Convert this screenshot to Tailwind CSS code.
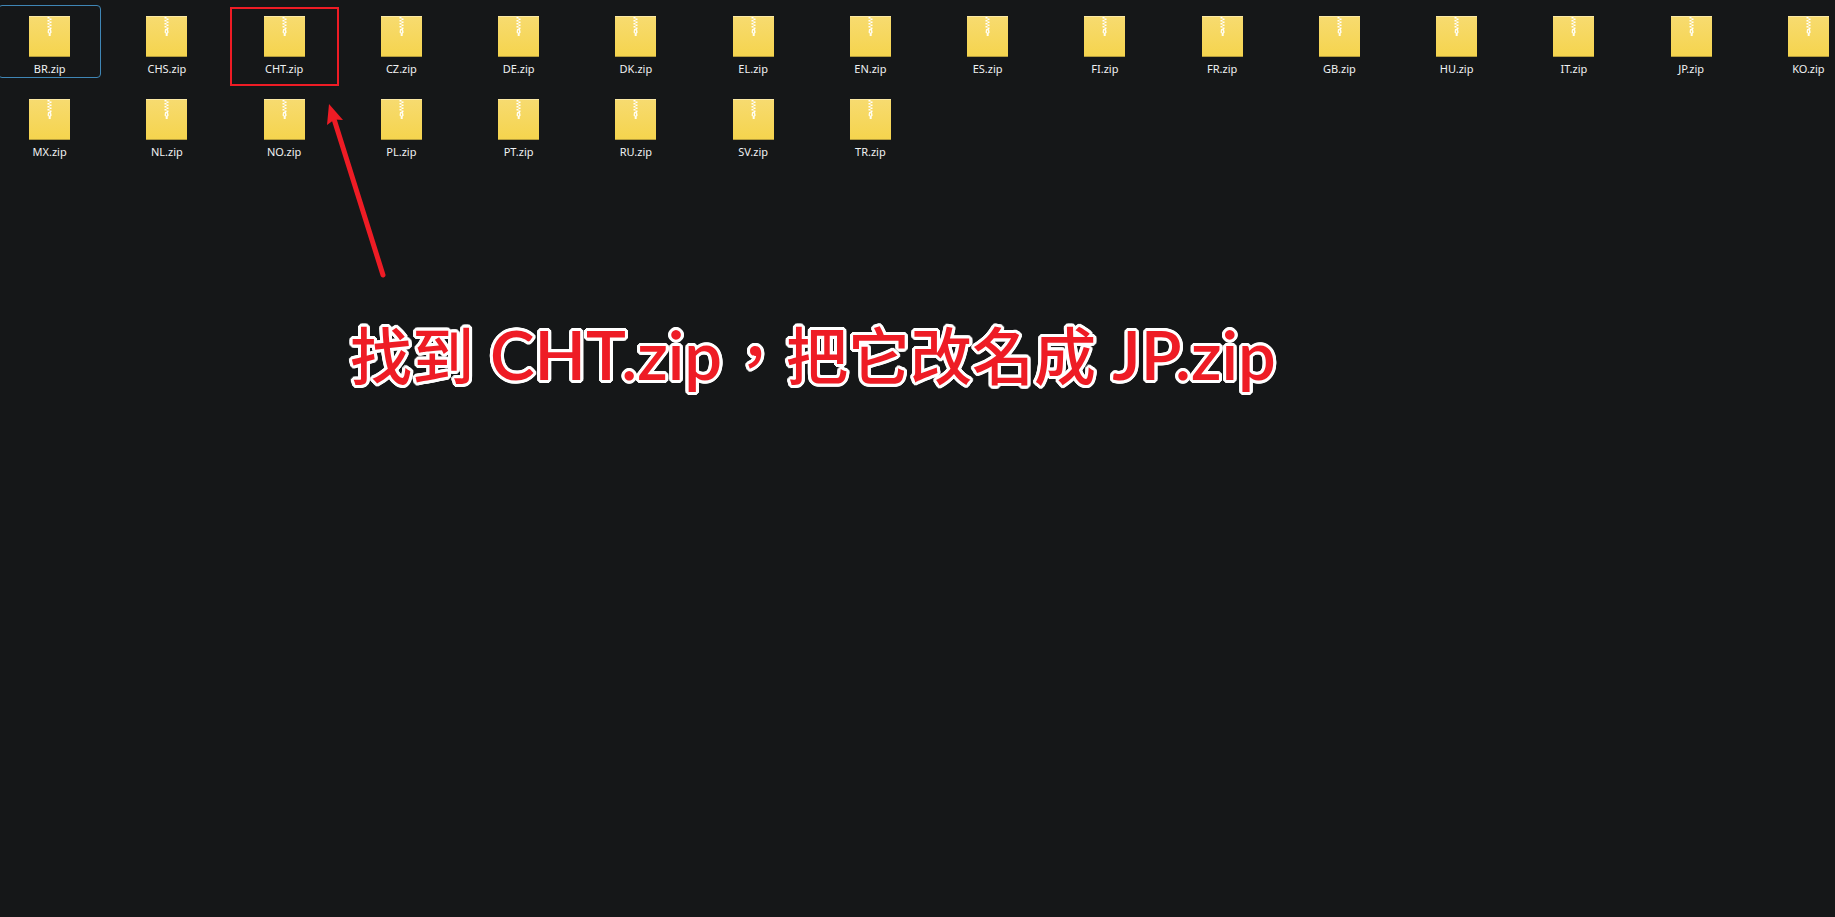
<!DOCTYPE html>
<html lang="zh-Hant">
<head>
  <meta charset="UTF-8">
  <meta name="viewport" content="width=device-width, initial-scale=1.0">
  <title>zip</title>
  <script src="https://cdn.jsdelivr.net/npm/@tailwindcss/browser@4"></script>
</head>
<body class="min-h-screen overflow-x-hidden bg-[#151718] font-['Noto_Sans','Noto_Sans_CJK_TC',sans-serif]">
  <!-- Shared zip icon -->
  <svg class="absolute size-0">
    <defs>
      <linearGradient id="paper" x1="0" y1="0" x2="0" y2="1">
        <stop offset="0" stop-color="#f7db70" />
        <stop offset="1" stop-color="#f5d44d" />
      </linearGradient>
    </defs>
    <symbol id="zip" viewBox="0 0 41 41">
      <rect width="41" height="41" fill="url(#paper)" />
      <rect width="41" height="1" fill="#fae8a4" />
      <rect y="40" width="41" height="1" fill="#b49c3c" />
      <path d="M18.500 1h2v1.500h-2zM20.500 2.500h2v1.500h-2zM18.500 4h2v1.500h-2zM20.500 5.500h2v1.500h-2zM18.500 7h2v1.500h-2zM20.500 8.500h2v1.500h-2zM18.500 10h2v1.500h-2zM20.500 11.500h2v1.500h-2z" fill="#fff" />
      <path d="M19 13h3l.7 3.500-1 1v2.500h-2v-2.500l-1.200-1zM20 14.500v2h1v-2z" fill="#fffdf0" fill-rule="evenodd" />
    </symbol>
  </svg>

  <main>
    <ul id="files" class="-ml-[9px] -mr-8 grid grid-cols-16 justify-items-center gap-y-[10px] pt-[5px]"></ul>

    <h1 class="mt-[147px] ml-[350px] flex items-baseline whitespace-nowrap text-[62px] leading-[90px] font-medium text-[#ee1c25] [text-shadow:3px_0_#fff,3px_1px_#fff,2px_2px_#fff,1px_3px_#fff,0_3px_#fff,-1px_3px_#fff,-2px_2px_#fff,-3px_1px_#fff,-3px_0_#fff,-3px_-1px_#fff,-2px_-2px_#fff,-1px_-3px_#fff,0_-3px_#fff,1px_-3px_#fff,2px_-2px_#fff,3px_-1px_#fff]">
      <span class="font-['Noto_Sans_CJK_TC',sans-serif]">找到</span>
      <span class="ml-4 font-['Lato',sans-serif] text-[67px] font-semibold">CHT.zip</span>
      <span class="ml-0.5 font-['Noto_Sans_CJK_TC',sans-serif]">，把它改名成</span>
      <span class="ml-4 font-['Lato',sans-serif] text-[67px] font-semibold">JP.zip</span>
    </h1>
  </main>

  <!-- Arrow pointing at CHT.zip -->
  <svg class="pointer-events-none absolute top-[100px] left-[320px] h-[180px] w-[70px]" viewBox="0 0 70 180">
    <path d="M14 19L63 175" stroke="#ee1c25" stroke-width="5" stroke-linecap="round" />
    <path d="M9 4L23 20L14.500 19.500L7 25z" fill="#ee1c25" />
  </svg>

  <script>
    const names = ['BR', 'CHS', 'CHT', 'CZ', 'DE', 'DK', 'EL', 'EN', 'ES', 'FI', 'FR', 'GB', 'HU', 'IT', 'JP', 'KO',
      'MX', 'NL', 'NO', 'PL', 'PT', 'RU', 'SV', 'TR'];

    // Build one tile per archive
    document.getElementById('files').innerHTML = names.map((name) => {
      const border = name === 'BR' ? 'border-[#3f86b5]' : 'border-transparent';
      const mark = name === 'CHT'
        ? '<span class="absolute -inset-x-1 top-px -bottom-[9px] border-2 border-[#ee1c25]"></span>'
        : '';
      return `
        <li>
          <button type="button" class="relative flex h-[73px] w-[103px] flex-col items-center rounded border pt-[10px] ${border}">
            <svg class="size-[41px]"><use href="#zip" /></svg>
            <span class="mt-1 text-[11px] leading-4 text-[#f0f1f2]">${name}.zip</span>
            ${mark}
          </button>
        </li>`;
    }).join('');
  </script>
</body>
</html>
